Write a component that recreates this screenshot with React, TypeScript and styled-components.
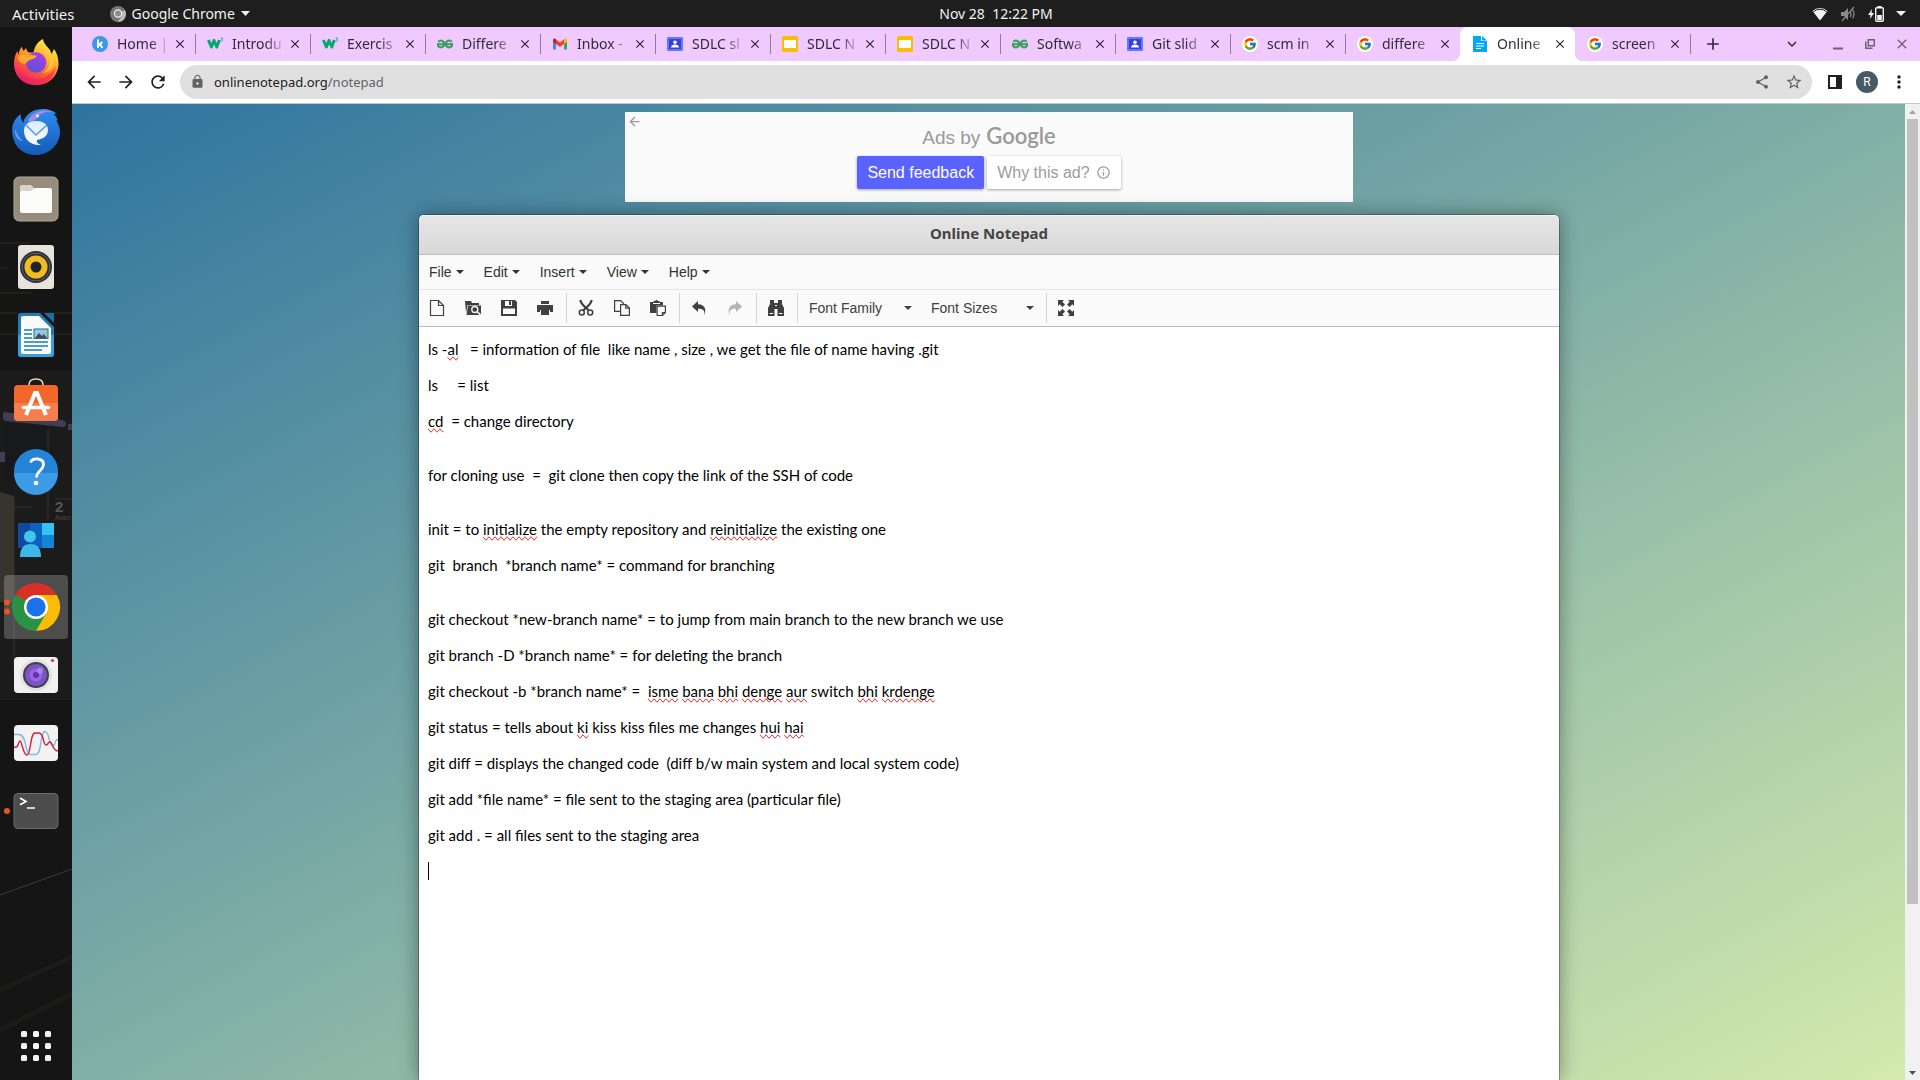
import React from 'react';
import styled, { createGlobalStyle, css } from 'styled-components';
import {
  MdAdd,
  MdArrowBack,
  MdArrowForward,
  MdClose,
  MdExpandMore,
  MdInfoOutline,
  MdLock,
  MdMoreVert,
  MdRefresh,
  MdShare,
  MdStarBorder,
} from 'react-icons/md';
import { FcGoogle } from 'react-icons/fc';
import { SiGeeksforgeeks } from 'react-icons/si';

const uiFont = '"Noto Sans", "Open Sans", sans-serif';
const arial = '"Liberation Sans", Arial, sans-serif';

const GlobalStyle = createGlobalStyle`
  *, *::before, *::after { box-sizing: border-box; }
  body { margin: 0; background: #141414; }
  button, select { font: inherit; color: inherit; }
  svg { display: block; flex: none; }
`;

const bareButton = css`
  display: flex;
  align-items: center;
  justify-content: center;
  padding: 0;
  border: 0;
  background: none;
`;

/* ---------- desktop shell ---------- */

const Desktop = styled.div`
  display: flex;
  flex-direction: column;
  height: 100vh;
  overflow: hidden;
  font-family: ${uiFont};
  font-size: 14px;
`;

const TopBar = styled.header`
  display: grid;
  grid-template-columns: 1fr auto 1fr;
  align-items: center;
  flex: none;
  height: 27px;
  padding-left: 72px;
  background: #1e1e1e;
  color: #f2f2f2;
`;

const TopLeft = styled.div`
  display: flex;
  align-items: center;
  gap: 35px;
  margin-left: -60px;
`;

const TopButton = styled.button<{ $large?: boolean }>`
  ${bareButton}
  gap: 6px;
  line-height: 20px;
  font-size: ${(p) => (p.$large ? 15 : 14)}px;
`;

const Clock = styled.time`
  white-space: pre;
  line-height: 20px;
`;

const Tray = styled.button`
  ${bareButton}
  justify-self: end;
  gap: 12px;
  padding-right: 14px;
`;

const Workspace = styled.div`
  display: flex;
  flex: 1;
  min-height: 0;
`;

/* ---------- dock ---------- */

const Dock = styled.nav`
  position: relative;
  display: flex;
  flex-direction: column;
  flex: none;
  gap: 4px;
  width: 72px;
  padding: 4px 4px 2px;
  background: #141514;
`;

const Wallpaper = styled.svg`
  position: absolute;
  left: 0;
  top: 0;
`;

const DockButton = styled.button<{ $active?: boolean; $last?: boolean }>`
  ${bareButton}
  position: relative;
  flex: none;
  width: 64px;
  height: 64px;
  border-radius: 4px;
  background: ${(p) => (p.$active ? 'rgba(255,255,255,.22)' : 'none')};
  margin-top: ${(p) => (p.$last ? 'auto' : 0)};
`;

/* ---------- browser ---------- */

const Browser = styled.main`
  display: flex;
  flex-direction: column;
  flex: 1;
  min-width: 0;
`;

const TabStrip = styled.div`
  display: flex;
  align-items: center;
  flex: none;
  height: 34px;
  padding: 0 8px;
  background: #f0c9fe;
  color: #33293a;
`;

const Tab = styled.div<{ $active?: boolean; $divider?: boolean }>`
  position: relative;
  display: flex;
  align-items: center;
  flex: 0 1 115px;
  min-width: 0;
  height: 34px;
  padding: 0 7px 0 12px;
  border-radius: 8px 8px 0 0;
  background: ${(p) => (p.$active ? '#fff' : 'none')};
  ${(p) =>
    p.$divider &&
    css`
      &::after {
        content: '';
        position: absolute;
        right: -1px;
        top: 7px;
        width: 1px;
        height: 20px;
        background: #94799f;
      }
    `}
  ${(p) =>
    p.$active &&
    css`
      &::before,
      &::after {
        content: '';
        position: absolute;
        bottom: 0;
        width: 8px;
        height: 8px;
      }
      &::before {
        left: -8px;
        background: radial-gradient(circle at 0 0, transparent 8px, #fff 8px);
      }
      &::after {
        right: -8px;
        background: radial-gradient(circle at 100% 0, transparent 8px, #fff 8px);
      }
    `}
`;

const TabTitle = styled.button`
  ${bareButton}
  justify-content: flex-start;
  flex: 1;
  min-width: 0;
  gap: 9px;
  line-height: 20px;
`;

const TabText = styled.span`
  flex: 1;
  min-width: 0;
  overflow: hidden;
  white-space: nowrap;
  text-align: left;
  mask-image: linear-gradient(to right, #000 60%, transparent 98%);
`;

const TabClose = styled.button`
  ${bareButton}
  width: 16px;
  height: 16px;
  color: #2a2230;
`;

const NewTab = styled.button`
  ${bareButton}
  width: 32px;
  height: 32px;
  margin-left: 7px;
`;

const WindowButtons = styled.div`
  display: flex;
  align-items: center;
  gap: 16px;
  margin-left: auto;
  padding-right: 2px;
  color: #6c6273;
`;

const WindowButton = styled.button<{ $dark?: boolean }>`
  ${bareButton}
  width: 16px;
  height: 24px;
  ${(p) => p.$dark && 'color: #33293a; margin-right: 14px;'}
`;

const NavBar = styled.div`
  display: flex;
  align-items: center;
  flex: none;
  height: 43px;
  padding: 0 10px 1px 11px;
  border-bottom: 1px solid #c5cbc8;
  background: #fff;
  color: #1f2023;
`;

const NavButton = styled.button<{ $narrow?: boolean }>`
  ${bareButton}
  width: ${(p) => (p.$narrow ? 22 : 32)}px;
  height: 32px;
`;

const NavGroup = styled.div`
  display: flex;
  gap: 10px;
  margin-left: 12px;
`;

const BackForward = styled.div`
  display: flex;
  margin: 0 6px 0 -5px;
`;

const Omnibox = styled.div`
  display: flex;
  align-items: center;
  flex: 1;
  height: 34px;
  padding: 0 2px 0 10px;
  border-radius: 17px;
  background: #e0e0e0;
  color: #5f6368;
  font-size: 13px;
`;

const Address = styled.a`
  flex: 1;
  margin-left: 9px;
  line-height: 20px;
  color: #5f6368;
  text-decoration: none;
`;

const Host = styled.span`
  color: #202124;
`;

const Avatar = styled.button`
  ${bareButton}
  width: 22px;
  height: 22px;
  margin: 5px 0;
  border-radius: 50%;
  background: #455a64;
  color: #fff;
  font-family: Roboto, sans-serif;
  font-size: 12px;
`;

/* ---------- web page ---------- */

const Viewport = styled.div`
  display: flex;
  flex: 1;
  min-height: 0;
`;

const Page = styled.div`
  display: flex;
  flex-direction: column;
  align-items: center;
  flex: 1;
  min-width: 0;
  overflow: hidden;
  padding: 8px 0 0 1px;
  background: linear-gradient(to bottom right, #2f749f, #d4eaad);
`;

const Ad = styled.aside`
  display: grid;
  grid-template-columns: 20px 1fr 20px;
  flex: none;
  width: 728px;
  max-width: 100%;
  height: 90px;
  background: #fafafa;
  color: #999;
  font-family: ${arial};
  font-size: 16px;
`;

const AdBack = styled.button`
  ${bareButton}
  width: 18px;
  height: 18px;
`;

const AdBody = styled.div`
  display: flex;
  flex-direction: column;
  align-items: center;
  padding-top: 10px;
`;

const AdHeading = styled.p`
  display: flex;
  align-items: baseline;
  gap: 6px;
  margin: 0;
  font-size: 19px;
  line-height: 28px;
`;

const GoogleWord = styled.span`
  font-family: Lato, sans-serif;
  font-weight: 600;
  font-size: 22px;
`;

const AdButtons = styled.div`
  display: flex;
  gap: 3px;
  margin-top: 4px;
`;

const AdButton = styled.button<{ $primary?: boolean }>`
  ${bareButton}
  gap: 6px;
  height: 33px;
  padding: 0 10px;
  border-radius: 2px;
  background: ${(p) => (p.$primary ? '#5a62ff' : '#fff')};
  color: ${(p) => (p.$primary ? '#fff' : '#9c9ca2')};
  box-shadow: 0 1px 3px rgba(0, 0, 0, 0.35);
`;

const Notepad = styled.section`
  display: flex;
  flex-direction: column;
  flex: 1;
  width: 1140px;
  max-width: 100%;
  margin-top: 13px;
  border-radius: 5px 5px 0 0;
  background: #fff;
  box-shadow: 0 0 0 1px rgba(0, 0, 0, 0.25), 0 0 20px rgba(0, 0, 0, 0.4);
`;

const TitleBar = styled.h1`
  flex: none;
  height: 40px;
  margin: 0;
  border-bottom: 1px solid #bcbcbc;
  border-radius: 5px 5px 0 0;
  background: linear-gradient(#e6e6e6, #d8d8d8);
  box-shadow: inset 0 1px 0 #f2f2f2;
  color: #444;
  font-family: "Noto Sans", "Open Sans", sans-serif;
  font-size: 15px;
  font-weight: 700;
  line-height: 36px;
  text-align: center;
`;

const MenuBar = styled.div`
  display: flex;
  flex: none;
  height: 35px;
  border-bottom: 1px solid #e5e5e5;
  background: #fafafa;
  color: #333;
  font-family: ${arial};
`;

const MenuButton = styled.button`
  ${bareButton}
  gap: 4px;
  padding: 0 10px;
`;

const ToolBar = styled.div`
  display: flex;
  align-items: center;
  flex: none;
  height: 37px;
  border-bottom: 1px solid #bdbdbd;
  background: #fafafa;
  color: #404040;
  font-family: ${arial};
`;

const ToolButton = styled.button<{ $dim?: boolean }>`
  ${bareButton}
  width: 36px;
  height: 30px;
  color: ${(p) => (p.$dim ? '#b5b5b5' : '#404040')};
`;

const Separator = styled.span`
  width: 1px;
  height: 30px;
  margin: 0 1px 0 3px;
  background: #d4d4d4;
`;

const SelectBox = styled.label`
  display: grid;
  grid-template-columns: 1fr;
  align-items: center;
  width: 122px;
  height: 30px;

  & > select {
    grid-area: 1 / 1;
    width: 100%;
    height: 30px;
    padding: 0 22px 0 10px;
    border: 0;
    background: none;
    appearance: none;
  }

  & > svg {
    grid-area: 1 / 1;
    justify-self: end;
    margin-right: 9px;
    pointer-events: none;
  }
`;

const Editor = styled.article`
  padding: 13px 9px;
  color: #000;
  font-family: Lato, sans-serif;
  font-size: 15px;
  line-height: 18px;
`;

const Paragraph = styled.p`
  min-height: 18px;
  margin: 0 0 18px;
  white-space: pre-wrap;
`;

const Misspelt = styled.span`
  text-decoration-line: spelling-error;
`;

const TextCursor = styled.span`
  display: block;
  width: 1px;
  height: 18px;
  background: #000;
`;

const ScrollBar = styled.div`
  display: flex;
  flex-direction: column;
  flex: none;
  width: 15px;
  background: #f1f1f1;
`;

const ScrollArrow = styled.button`
  ${bareButton}
  flex: none;
  height: 15px;
`;

const ScrollTrack = styled.div`
  flex: 1;
  padding: 0 2px;
`;

const ScrollThumb = styled.div`
  height: 83%;
  background: #c1c1c1;
`;

/* ---------- small drawings ---------- */

const Caret = ({ w = 8, h = 4 }: { w?: number; h?: number }) => (
  <svg width={w} height={h} viewBox="0 0 8 4" preserveAspectRatio="none" aria-hidden="true">
    <path d="M0 0h8L4 4z" fill="currentColor" />
  </svg>
);

const SlidesIcon = () => (
  <svg width="16" height="16" viewBox="0 0 16 16">
    <rect width="16" height="16" rx="1.500" fill="#fbbc04" />
    <rect x="2" y="4" width="12" height="8" fill="#fff" />
  </svg>
);

const ClassIcon = () => (
  <svg width="16" height="16" viewBox="0 0 16 16">
    <rect y="1" width="16" height="14" rx="1" fill="#5e7bff" />
    <rect x="2" y="3" width="12" height="10" fill="#3b3fd8" />
    <circle cx="8" cy="6.200" r="1.800" fill="#fff" />
    <path d="M4 11.600c0-2 2-3 4-3s4 1 4 3z" fill="#fff" />
  </svg>
);

const SchoolIcon = () => (
  <svg width="16" height="16" viewBox="0 0 16 16" fill="none" stroke="#04aa6d">
    <path d="M1.400 4l3 7L7 4.500 9.800 11l2.600-7" strokeWidth="3" strokeLinejoin="round" />
    <path d="M13.800 2h1.800l-.9 1.500c1.600.2 1.200 2.300-.9 1.700" strokeWidth=".8" />
  </svg>
);

const GeeksIcon = () => <SiGeeksforgeeks size={16} color="#2f9d54" strokeWidth={1} />;

const GmailIcon = () => (
  <svg width="16" height="16" viewBox="0 0 16 16">
    <path d="M1 4v9.500h3V7z" fill="#4285f4" />
    <path d="M15 4v9.500h-3V7z" fill="#34a853" />
    <path d="M4 3.500V8l4 3 4-3V3.500l-4 3z" fill="#ea4335" />
    <path d="M1 4c0-1.800 2-2 3-.8V8L1 5.800z" fill="#c5221f" />
    <path d="M15 4c0-1.800-2-2-3-.8V8l3-2.200z" fill="#fbbc04" />
  </svg>
);

const KIcon = () => (
  <svg width="16" height="16" viewBox="0 0 16 16">
    <circle cx="8" cy="8" r="8" fill="#3b97ea" />
    <path d="M6 3.500v8.500M10.300 6L6.500 9.200M8 8l2.400 4" stroke="#fff" strokeWidth="2" />
  </svg>
);

const GoogleDisc = styled.span`
  display: grid;
  place-items: center;
  flex: none;
  width: 16px;
  height: 16px;
  border-radius: 50%;
  background: #fff;
`;

const GoogleIcon = () => (
  <GoogleDisc>
    <FcGoogle size={14} />
  </GoogleDisc>
);

const DocIcon = () => (
  <svg width="16" height="16" viewBox="0 0 16 16">
    <path d="M1 0h8v5h6v11H1z" fill="#03a9f4" />
    <path d="M10 0l5 4.500h-5z" fill="#03a9f4" />
    <path d="M4 7.500h8M4 10h8M4 12.500h5" stroke="#fff" />
  </svg>
);

const favicons = {
  k: KIcon,
  w3: SchoolIcon,
  geeks: GeeksIcon,
  gmail: GmailIcon,
  cls: ClassIcon,
  slides: SlidesIcon,
  google: GoogleIcon,
  doc: DocIcon,
};

const tabs: { icon: keyof typeof favicons; title: string; active?: boolean }[] = [
  { icon: 'k', title: 'Home |' },
  { icon: 'w3', title: 'Introdu' },
  { icon: 'w3', title: 'Exercis' },
  { icon: 'geeks', title: 'Differe' },
  { icon: 'gmail', title: 'Inbox -' },
  { icon: 'cls', title: 'SDLC sl' },
  { icon: 'slides', title: 'SDLC N' },
  { icon: 'slides', title: 'SDLC N' },
  { icon: 'geeks', title: 'Softwa' },
  { icon: 'cls', title: 'Git slid' },
  { icon: 'google', title: 'scm in' },
  { icon: 'google', title: 'differe' },
  { icon: 'doc', title: 'Online', active: true },
  { icon: 'google', title: 'screen' },
];

/* ---------- dock drawings, each on a 64 by 64 cell ---------- */

const Firefox = () => (
  <>
    <defs>
      <linearGradient id="ffBody" x1=".8" y1="0" x2=".25" y2="1">
        <stop offset="0" stopColor="#fff44f" />
        <stop offset=".35" stopColor="#ffb52a" />
        <stop offset=".65" stopColor="#ff5a35" />
        <stop offset="1" stopColor="#e5127a" />
      </linearGradient>
      <linearGradient id="ffGlobe" x1=".7" y1="0" x2=".3" y2="1">
        <stop offset="0" stopColor="#a63df0" />
        <stop offset="1" stopColor="#5b54d0" />
      </linearGradient>
    </defs>
    <path
      d="M18 15.500c0 2 .5 3.200 1.800 4.200L22 17c.4 2 1.500 3.500 3 4.500h4.500C31 14.500 34 10.500 39 8c.6 5 4.500 7.500 7 11l1.500 4 2.500-5c3 4 4.700 9.500 4.500 15C54 46 44 54.200 32 54.200S10.200 46 10 33c0-5 .8-9 3.400-13l.8 4c1-4 2-6.500 3.800-8.500z"
      fill="url(#ffBody)"
    />
    <circle cx="32" cy="31.500" r="10.200" fill="url(#ffGlobe)" />
    <path d="M14 25c6-3 13-.5 18-.5 1.500 2-3 3.500-6 4.500-3 1-3 3.500-6 4-4-1-7-4-6-8z" fill="#ffa62b" />
    <path d="M42 22c6 6 4 17-4 20 10 0 14-9 10-17-1-2-3-3-6-3z" fill="#ffd23e" opacity=".7" />
    <path d="M14 38c4 9 14 12 24 9 6-2 11-6 14-12-1 12-10 19-20 19-9 0-17-6-18-16z" fill="#ee2358" opacity=".55" />
  </>
);

const Thunderbird = () => (
  <>
    <defs>
      <linearGradient id="tbBody" x1=".5" y1="0" x2=".5" y2="1">
        <stop offset="0" stopColor="#2f8cf0" />
        <stop offset="1" stopColor="#135bb8" />
      </linearGradient>
      <linearGradient id="tbMail" x1="0" y1="0" x2="0" y2="1">
        <stop offset="0" stopColor="#d9ecff" />
        <stop offset="1" stopColor="#fff" />
      </linearGradient>
    </defs>
    <path
      d="M17 15c-1 4 1 6 2 9 2-8 9-13.500 19-14 6-.3 10 1.500 15 4.500l-3.500.5c2.500 2 3.500 4 4.500 7l-2-1c3 5 4 8 4 13-1 12-11 22-24 22C18 56 8 46 8.200 31c0-7 3-12 8.800-16z"
      fill="url(#tbBody)"
    />
    <path d="M24 22c3-8 14-13 26-9-8-1-14 1-17 6-2 3-6 4-9 3z" fill="#a58be8" />
    <path d="M11 30c2 5 4 9 8 12-5 0-9-6-8-12z" fill="#6e9bf0" />
    <circle cx="33.500" cy="17" r="1.400" fill="#fff" />
    <path d="M20 32c0-7 5-10 12-10s12 3 12 9-5 9-11 10c-1 2 1 4 4 5-9 1-17-5-17-14z" fill="url(#tbMail)" />
    <path d="M22 26l10 10 11-10" stroke="#5b9bdf" strokeWidth="1.500" fill="none" />
  </>
);

const Files = () => (
  <>
    <rect x="10" y="10" width="44" height="44" rx="5" fill="#958c7b" stroke="#b0a898" />
    <path d="M16 20q0-2 2-2h9l4 4v10H16z" fill="#d9d4c8" />
    <path d="M16 26q0-2 2-2h9l4-3h15q2 0 2 2v21q0 2-2 2H18q-2 0-2-2z" fill="#fbfbfa" />
  </>
);

const Rhythmbox = () => (
  <>
    <rect x="14" y="10" width="36" height="44" rx="3" fill="#e7e2da" />
    <circle cx="32" cy="32" r="16" fill="#2c2f38" />
    <circle cx="32" cy="32" r="14" fill="none" stroke="#6a6d75" strokeWidth=".8" />
    <circle cx="32" cy="32" r="11.500" fill="#f3bb1c" />
    <circle cx="32" cy="32" r="5.500" fill="#222" />
  </>
);

const Writer = () => (
  <>
    <path d="M17 10h19l14 14v27q0 3-3 3H17q-3 0-3-3V13q0-3 3-3z" fill="#1f7cb5" />
    <path d="M14 32h36v19q0 3-3 3H17q-3 0-3-3z" fill="#3ba0da" />
    <path d="M19 13h16l12 12v24q0 2-2 2H19q-2 0-2-2V15q0-2 2-2z" fill="#f8fafb" />
    <path d="M40 10h10v10z" fill="#1d6f9f" />
    <path d="M20 27h8M20 31h8M20 35h8M20 39h24M20 43h24M20 47h18" stroke="#2179ae" strokeWidth="1.600" />
    <rect x="30" y="26" width="14" height="9.500" fill="#8fc9ea" stroke="#1c6a98" />
    <path d="M31 35l4-5 3 3 2-2 3 4z" fill="#4b4b4b" />
    <circle cx="41" cy="28.500" r="1.200" fill="#f6b73c" />
  </>
);

const Software = () => (
  <>
    <path d="M25 16v-2q0-6 7-6t7 6v2" stroke="#f1dcb0" strokeWidth="1.500" fill="none" />
    <rect x="10" y="14" width="44" height="36" rx="4" fill="#f2652b" />
    <path d="M10 32h44v14q0 4-4 4H14q-4 0-4-4z" fill="#f47f4c" />
    <path d="M22 44l9-22h2l9 22" stroke="#fff" strokeWidth="4" fill="none" />
    <path d="M19.500 36.500h25" stroke="#fff" strokeWidth="3.600" strokeLinecap="round" />
  </>
);

const Help = () => (
  <>
    <circle cx="32" cy="32" r="22" fill="#2384d8" />
    <path d="M10 34h44a22 22 0 0 1-44 0z" fill="#3c9ae6" />
    <path d="M26.500 23.500c2-5 13-5 13 2 0 6-7 6-7 13" stroke="#fff" strokeWidth="2.800" fill="none" />
    <circle cx="32" cy="44" r="2.300" fill="#fff" />
  </>
);

const People = () => (
  <>
    <path d="M14 16h12v25H14z" fill="#0f4a9c" />
    <path d="M26 16h12v25H26z" fill="#0b63bd" />
    <path d="M38 16h12v12H38z" fill="#36c2ee" />
    <path d="M38 28h12v13H38z" fill="#1384d8" />
    <circle cx="26" cy="29.500" r="6" fill="#42c5ee" />
    <path d="M16 50q0-13 10.500-13T37 50z" fill="#3bb8ea" />
  </>
);

const Chrome = () => (
  <>
    <circle cx="3" cy="27.500" r="3" fill="#e95420" />
    <circle cx="3" cy="36.500" r="3" fill="#e95420" />
    <path d="M32 32L11.200 20A24 24 0 0 1 52.800 20z" fill="#d93025" />
    <path d="M32 32V20h20.800A24 24 0 0 1 32 56z" fill="#fbbc04" />
    <path d="M32 32l10.400 6L32 56A24 24 0 0 1 11.200 20z" fill="#2a9245" />
    <path d="M11.200 20l10.400 18L32 20z" fill="#d93025" />
    <path d="M11.200 20L21.600 38 24 26z" fill="#2a9245" />
    <circle cx="32" cy="32" r="12" fill="#fff" />
    <circle cx="32" cy="32" r="9.600" fill="#1a73e8" />
  </>
);

const Camera = () => (
  <>
    <rect x="10" y="14" width="44" height="36" rx="4" fill="#f1f1f1" />
    <circle cx="32" cy="32" r="16" fill="#e2e2e2" />
    <circle cx="32" cy="32" r="13" fill="#3c4048" />
    <circle cx="32" cy="32" r="11" fill="#7c52c9" />
    <circle cx="32" cy="32" r="6.500" fill="#9a66e0" />
    <circle cx="32" cy="32" r="3" fill="#5f35a8" />
    <circle cx="36" cy="27.500" r="3" fill="#b79aea" opacity=".7" />
    <circle cx="48.500" cy="17.500" r="1.600" fill="#e0392b" />
  </>
);

const Monitor = () => (
  <>
    <rect x="10" y="14" width="44" height="36" rx="4" fill="#f2f2f2" />
    <path d="M10 23.500h5c8 0 6 20 11 20h6c6 0 4-23 9-23s3 14 8 14c3 0 1-6 5-6" stroke="#86b7e8" strokeWidth="1.400" fill="none" />
    <path d="M10 36c5 2 4-6 6-6s3 14 7 14 3-22 8-22h4c5 0 4 12 7 12s1-3 4-3 2 9 8 9" stroke="#cf1f3e" strokeWidth="1.400" fill="none" />
  </>
);

const Terminal = () => (
  <>
    <circle cx="3" cy="32" r="3" fill="#e95420" />
    <rect x="10" y="14.500" width="44" height="35" rx="4" fill="#4c4c4c" stroke="#6b6b6b" />
    <path d="M16 19l6 3.500-6 3.200M23 29h8" stroke="#fff" strokeWidth="1.700" fill="none" />
  </>
);

const AppGrid = () => (
  <>
    {[17, 29, 41].map((y) =>
      [17, 29, 41].map((x) => <rect key={`${x}-${y}`} x={x} y={y} width="6" height="6" rx="1.500" fill="#f4f4f4" />),
    )}
  </>
);

const dockItems = [
  { name: 'Firefox', Art: Firefox },
  { name: 'Thunderbird', Art: Thunderbird },
  { name: 'Files', Art: Files },
  { name: 'Rhythmbox', Art: Rhythmbox },
  { name: 'LibreOffice Writer', Art: Writer },
  { name: 'Software', Art: Software },
  { name: 'Help', Art: Help },
  { name: 'Remote desktop', Art: People },
  { name: 'Google Chrome', Art: Chrome, active: true },
  { name: 'Screenshot', Art: Camera },
  { name: 'System Monitor', Art: Monitor },
  { name: 'Terminal', Art: Terminal },
  { name: 'Show applications', Art: AppGrid, last: true },
];

/* ---------- notepad toolbar drawings ---------- */

const toolArt: Record<string, React.ReactNode> = {
  New: <path d="M1.500.5h8l5 5v10h-13zM9.500.5v5h5" fill="none" stroke="currentColor" strokeWidth="1.200" />,
  Open: (
    <>
      <path d="M0 1h6l1 2h7v2H2.500L1 13z" fill="currentColor" />
      <path d="M3 5.500h13V15H1.500z" fill="currentColor" />
      <circle cx="9.800" cy="9.500" r="3" fill="#404040" stroke="#fafafa" strokeWidth="1.300" />
      <path d="M12 11.500l3.500 3.500" stroke="#fafafa" strokeWidth="1.600" />
    </>
  ),
  Save: (
    <>
      <path d="M0 0h14l2 2v14H0z" fill="currentColor" />
      <path d="M4 1h7v5H4zM2 8.500h12V14H2z" fill="#fafafa" />
      <path d="M8 1h2v4H8z" fill="currentColor" />
    </>
  ),
  Print: (
    <>
      <path d="M4 1h8v3H4zM0 5h16v7h-3v-2H3v2H0z" fill="currentColor" />
      <path d="M4 9.500h8V15H4z" fill="currentColor" />
    </>
  ),
  Cut: (
    <g fill="none" stroke="currentColor">
      <path d="M2.500 0c0 4 3 5.500 8 10M13.500 0c0 4-3 5.500-8 10" strokeWidth="2.200" />
      <circle cx="3.800" cy="12.500" r="2.500" strokeWidth="1.500" />
      <circle cx="12.200" cy="12.500" r="2.500" strokeWidth="1.500" />
    </g>
  ),
  Copy: (
    <g fill="#fafafa" stroke="currentColor" strokeWidth="1.200">
      <path d="M.6.6h6l3 3v7.800h-9z" />
      <path d="M6.600 4.600h5.400l3.400 3.400v7.400H6.600zM11.800 4.600v3.600h3.600" />
    </g>
  ),
  Paste: (
    <>
      <path d="M0 2h3.500V1h2V0h2v1h2v1H13v3.500H6.500V13H0z" fill="currentColor" />
      <path d="M3 3.500h7" stroke="#fafafa" />
      <path d="M7.100 6.100h8.300v6.400l-3 3H7.100zM12.400 15.500v-3h3" fill="#fafafa" stroke="currentColor" strokeWidth="1.200" />
    </>
  ),
  Undo: <path d="M7 1L1 6.500 7 12V8.800c5 0 7.500 1.500 5.800 6.700C16 10 14 4.300 7 4.200z" fill="currentColor" />,
  Redo: <path d="M9 1l6 5.500L9 12V8.800C4 8.800 1.500 10.300 3.200 15.500 0 10 2 4.300 9 4.200z" fill="currentColor" />,
  Find: (
    <>
      <path d="M2 0h4v3h4V0h4v4l2 4v8H9.500V9h-3v7H0V8l2-4z" fill="currentColor" />
      <path d="M1.500 13.500h3.500M11 13.500h3.500M7 5.500h2" stroke="#fafafa" />
    </>
  ),
  Fullscreen: (
    <>
      <path d="M0 0h6L4.300 1.700 7 4.500 4.500 7 1.700 4.300 0 6zM16 0v6l-1.700-1.700L11.500 7 9 4.500l2.700-2.800L10 0z" fill="currentColor" />
      <path d="M0 16v-6l1.700 1.700L4.500 9 7 11.500l-2.700 2.800L6 16zM16 16h-6l1.700-1.700L9 11.500 11.500 9l2.800 2.700L16 10z" fill="currentColor" />
    </>
  ),
};

const Tool = ({ name, dim }: { name: string; dim?: boolean }) => (
  <ToolButton type="button" aria-label={name} $dim={dim}>
    <svg width="16" height="16" viewBox="0 0 16 16">
      {toolArt[name]}
    </svg>
  </ToolButton>
);

const FontSelect = ({ name }: { name: string }) => (
  <SelectBox>
    <select aria-label={name} defaultValue={name}>
      <option>{name}</option>
    </select>
    <Caret />
  </SelectBox>
);

/* Misspelt words are wrapped in square brackets. */
const lines = [
  'ls -[al]   = information of file  like name , size , we get the file of name having .git',
  'ls     = list',
  '[cd]  = change directory',
  '\nfor cloning use  =  git clone then copy the link of the SSH of code',
  '\ninit = to [initialize] the empty repository and [reinitialize] the existing one',
  'git  branch  *branch name* = command for branching',
  '\ngit checkout *new-branch name* = to jump from main branch to the new branch we use',
  'git branch -D *branch name* = for deleting the branch',
  'git checkout -b *branch name* =  [isme] [bana] [bhi] [denge] [aur] switch [bhi] [krdenge]',
  'git status = tells about [ki] kiss kiss files me changes [hui] [hai]',
  'git diff = displays the changed code  (diff b/w main system and local system code)',
  'git add *file name* = file sent to the staging area (particular file)',
  'git add . = all files sent to the staging area',
];

const renderLine = (line: string) =>
  line.split(/[[\]]/).map((part, i) => (i % 2 ? <Misspelt key={i}>{part}</Misspelt> : part));

export default function App() {
  return (
    <Desktop>
      <GlobalStyle />
      <TopBar>
        <TopLeft>
          <TopButton type="button" $large>
            Activities
          </TopButton>
          <TopButton type="button">
            <svg width="16" height="16" viewBox="0 0 16 16">
              <circle cx="8" cy="8" r="8" fill="#777" />
              <path d="M8 8l6.900-4A8 8 0 0 1 8 16l3.500-6z" fill="#bbb" />
              <circle cx="8" cy="7.500" r="3.600" fill="#8a8a8a" stroke="#eee" strokeWidth="1.200" />
            </svg>
            Google Chrome
            <Caret w={9} h={5} />
          </TopButton>
        </TopLeft>
        <Clock>{'Nov 28  12:22 PM'}</Clock>
        <Tray type="button" aria-label="System menu">
          <svg width="16" height="16" viewBox="0 0 16 16">
            <path d="M.5 5a11 11 0 0 1 15 0L8 14.500z" fill="#f2f2f2" />
            <path d="M1.500 5.800a9.500 9.500 0 0 1 13 0" stroke="#1e1e1e" strokeWidth="1" fill="none" />
          </svg>
          <svg width="16" height="16" viewBox="0 0 16 16" stroke="#8a8a8a" fill="none">
            <path d="M1 6h3l4-4v12l-4-4H1z" fill="#8a8a8a" stroke="none" />
            <path d="M10 5q2 3 0 6M12.500 3.500q3 4.500 0 9M2 15L14 1" strokeWidth="1.200" />
          </svg>
          <svg width="16" height="16" viewBox="0 0 16 16">
            <path d="M4 3L0 9h2.500L2 13l4-6H3.500z" fill="#f2f2f2" />
            <rect x="7.700" y="1.700" width="7.600" height="13.600" rx="1" fill="none" stroke="#f2f2f2" strokeWidth="1.400" />
            <path d="M9.500 0h4v2h-4zM9.200 9h4.600v5H9.200z" fill="#f2f2f2" />
          </svg>
          <Caret w={10} h={5} />
        </Tray>
      </TopBar>

      <Workspace>
        <Dock aria-label="Dock">
          <Wallpaper width="72" height="1053" viewBox="0 27 72 1053" aria-hidden="true">
            <path d="M0 370h72v330H0z" fill="#1b1b1c" />
            <path d="M4 424h44v60H4z" fill="#18191b" />
            <path d="M3 414q0-2 2-2l58 8q3 1 3 4t-3 3L6 421q-3 0-3-4z" fill="#443b55" />
            <path d="M68 424h4v6h-4zM0 452h5v10H0z" fill="#443b55" />
            <path d="M0 492l14 4v106H0z" fill="#35342d" />
            <path d="M14 500v170M48 430v90M14 507h18M55 499h17" stroke="#34352f" />
            <path d="M0 243h30M0 293h32M0 313h72M0 334h72M0 268h8" stroke="#2c2a20" />
            <path d="M0 895l72-26" stroke="#3b3b39" />
            <path d="M0 990l72-33M0 1030l72-36" stroke="#1b1b17" strokeWidth="5" />
            <text x="55" y="512" fill="#555552" fontFamily="Liberation Sans" fontSize="15" fontWeight="700">
              2
            </text>
            <text x="55" y="520" fill="#4a4a47" fontFamily="Liberation Sans" fontSize="7">
              Aven
            </text>
          </Wallpaper>
          {dockItems.map(({ name, Art, active, last }) => (
            <DockButton key={name} type="button" aria-label={name} $active={active} $last={last}>
              <svg width="64" height="64" viewBox="0 0 64 64">
                <Art />
              </svg>
            </DockButton>
          ))}
        </Dock>

        <Browser>
          <TabStrip>
            {tabs.map(({ icon, title, active }, i) => {
              const Icon = favicons[icon];
              return (
                <Tab key={i} $active={active} $divider={!active && !tabs[i + 1]?.active}>
                  <TabTitle type="button">
                    <Icon />
                    <TabText>{title}</TabText>
                  </TabTitle>
                  <TabClose type="button" aria-label={`Close ${title}`}>
                    <MdClose size={14} />
                  </TabClose>
                </Tab>
              );
            })}
            <NewTab type="button" aria-label="New tab">
              <MdAdd size={20} />
            </NewTab>
            <WindowButtons>
              <WindowButton type="button" aria-label="Search tabs" $dark>
                <MdExpandMore size={18} />
              </WindowButton>
              <WindowButton type="button" aria-label="Minimize">
                <svg width="10" height="14">
                  <path d="M0 10.500h10v2H0z" fill="currentColor" />
                </svg>
              </WindowButton>
              <WindowButton type="button" aria-label="Restore">
                <svg width="10" height="10" viewBox="0 0 10 10" fill="none" stroke="currentColor" strokeWidth="1.500">
                  <path d="M3.300.8h6v6h-6zM.8 2.500v6.700h6.700" />
                </svg>
              </WindowButton>
              <WindowButton type="button" aria-label="Close window">
                <MdClose size={16} />
              </WindowButton>
            </WindowButtons>
          </TabStrip>

          <NavBar>
            <BackForward>
              <NavButton type="button" aria-label="Back">
                <MdArrowBack size={20} />
              </NavButton>
              <NavButton type="button" aria-label="Forward">
                <MdArrowForward size={20} />
              </NavButton>
              <NavButton type="button" aria-label="Reload">
                <MdRefresh size={20} />
              </NavButton>
            </BackForward>
            <Omnibox>
              <MdLock size={15} />
              <Address href="#notepad">
                <Host>onlinenotepad.org</Host>/notepad
              </Address>
              <NavButton type="button" aria-label="Share">
                <MdShare size={16} />
              </NavButton>
              <NavButton type="button" aria-label="Bookmark">
                <MdStarBorder size={18} />
              </NavButton>
            </Omnibox>
            <NavGroup>
              <NavButton type="button" aria-label="Side panel" $narrow>
                <svg width="14" height="14" viewBox="0 0 14 14">
                  <path d="M0 0h14v14H0zM2 2v10h6V2z" fill="currentColor" fillRule="evenodd" />
                </svg>
              </NavButton>
              <Avatar type="button">R</Avatar>
              <NavButton type="button" aria-label="Menu" $narrow>
                <MdMoreVert size={20} />
              </NavButton>
            </NavGroup>
          </NavBar>

          <Viewport>
            <Page>
              <Ad>
                <AdBack type="button" aria-label="Back">
                  <MdArrowBack size={15} />
                </AdBack>
                <AdBody>
                  <AdHeading>
                    Ads by <GoogleWord>Google</GoogleWord>
                  </AdHeading>
                  <AdButtons>
                    <AdButton type="button" $primary>
                      Send feedback
                    </AdButton>
                    <AdButton type="button">
                      Why this ad? <MdInfoOutline size={15} />
                    </AdButton>
                  </AdButtons>
                </AdBody>
              </Ad>

              <Notepad>
                <TitleBar>Online Notepad</TitleBar>
                <MenuBar>
                  {['File', 'Edit', 'Insert', 'View', 'Help'].map((name) => (
                    <MenuButton key={name} type="button">
                      {name}
                      <Caret />
                    </MenuButton>
                  ))}
                </MenuBar>
                <ToolBar>
                  <Tool name="New" />
                  <Tool name="Open" />
                  <Tool name="Save" />
                  <Tool name="Print" />
                  <Separator />
                  <Tool name="Cut" />
                  <Tool name="Copy" />
                  <Tool name="Paste" />
                  <Separator />
                  <Tool name="Undo" />
                  <Tool name="Redo" dim />
                  <Separator />
                  <Tool name="Find" />
                  <Separator />
                  <FontSelect name="Font Family" />
                  <FontSelect name="Font Sizes" />
                  <Separator />
                  <Tool name="Fullscreen" />
                </ToolBar>
                <Editor>
                  {lines.map((line) => (
                    <Paragraph key={line}>{renderLine(line)}</Paragraph>
                  ))}
                  <TextCursor />
                </Editor>
              </Notepad>
            </Page>
            <ScrollBar>
              <ScrollArrow type="button" aria-label="Scroll up">
                <svg width="7" height="4" viewBox="0 0 7 4">
                  <path d="M0 4h7L3.500 0z" fill="#a3a3a3" />
                </svg>
              </ScrollArrow>
              <ScrollTrack>
                <ScrollThumb />
              </ScrollTrack>
              <ScrollArrow type="button" aria-label="Scroll down">
                <svg width="7" height="4" viewBox="0 0 7 4">
                  <path d="M0 0h7L3.500 4z" fill="#505050" />
                </svg>
              </ScrollArrow>
            </ScrollBar>
          </Viewport>
        </Browser>
      </Workspace>
    </Desktop>
  );
}
